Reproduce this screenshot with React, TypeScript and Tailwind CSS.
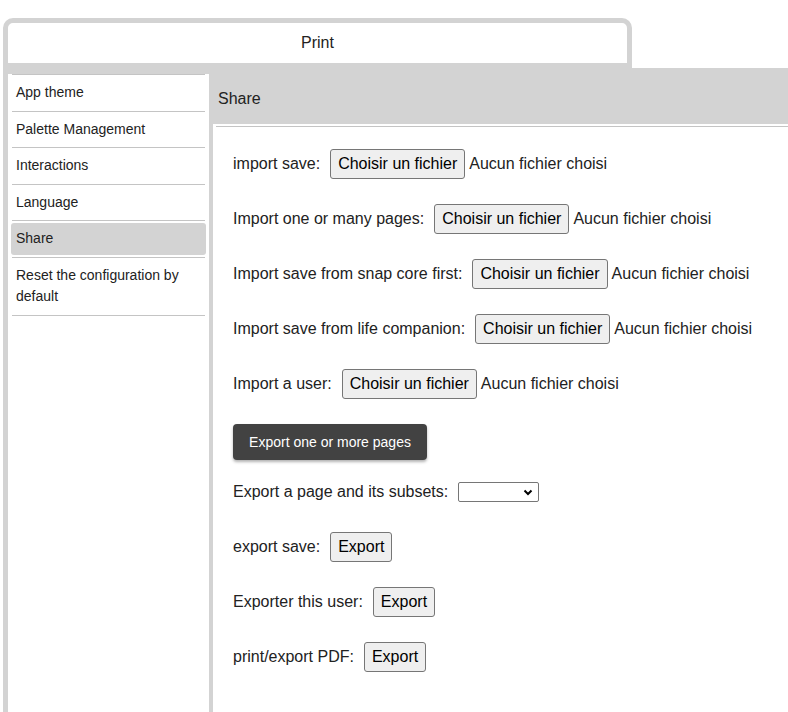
const MENU = [
  { label: "App theme" },
  { label: "Palette Management" },
  { label: "Interactions" },
  { label: "Language" },
  { label: "Share", active: true },
  { label: "Reset the configuration by default" },
];

function FileRow({ label }: { label: string }) {
  return (
    <div className="flex items-center h-[30px]">
      <span>{label}</span>
      <button className="ml-[10px] h-[30px] px-[7px] border border-[#767676] rounded-[3px] bg-[#efefef] text-[#000]">
        Choisir un fichier
      </button>
      <span className="ml-[4px]">Aucun fichier choisi</span>
    </div>
  );
}

function ExportRow({ label }: { label: string }) {
  return (
    <div className="flex items-center h-[30px]">
      <span>{label}</span>
      <button className="ml-[10px] h-[30px] px-[7px] border border-[#767676] rounded-[3px] bg-[#efefef] text-[#000]">
        Export
      </button>
    </div>
  );
}

export default function App() {
  return (
    <div className="w-[788px] h-[712px] overflow-hidden bg-white text-[#222] text-[16px]" style={{ fontFamily: '"Liberation Sans", Arial, sans-serif' }}>
      <div className="h-[18px]" />
      <div className="ml-[3px] w-[629px] h-[50px] border-[5px] border-[#d3d3d3] rounded-t-[10px] bg-white flex items-center justify-center">
        <span className="-mt-[1px]">Print</span>
      </div>
      <div className="ml-[3px] bg-[#d3d3d3] h-[644px] flex">
        <div className="ml-[5px] mt-[6px] w-[201px] bg-white px-[3px]">
          <div className="mx-px border-t border-[#c4c4c4]" />
          {MENU.map(m => (
            <div key={m.label} className="mx-px border-b border-[#c4c4c4]">
              <div className={`my-[2px] -mx-px px-[5px] py-[5px] text-[14px] leading-[21.5px] rounded-[3px] ${m.active ? "bg-[#d3d3d3]" : ""}`}>
                {m.label}
              </div>
            </div>
          ))}
        </div>
        <div className="ml-[4px] flex-1 flex flex-col">
          <div className="h-[56px] flex items-center pl-[5px] pt-[6px]">Share</div>
          <div className="flex-1 bg-white pt-[2px] pl-[3px]">
            <div className="h-px bg-[#c4c4c4]" />
            <div className="pl-[17px] pt-[22px] flex flex-col">
              <FileRow label="import save:" />
              <div className="mt-[25px]"><FileRow label="Import one or many pages:" /></div>
              <div className="mt-[25px]"><FileRow label="Import save from snap core first:" /></div>
              <div className="mt-[25px]"><FileRow label="Import save from life companion:" /></div>
              <div className="mt-[25px]"><FileRow label="Import a user:" /></div>
              <button className="mt-[25px] w-[194px] h-[36px] rounded-[4px] bg-[#424242] text-white text-[14px] shadow-[0_2px_3px_rgba(0,0,0,0.3)]">
                Export one or more pages
              </button>
              <div className="mt-[17px] flex items-center h-[30px]">
                <span>Export a page and its subsets:</span>
                <div className="ml-[10px] w-[81px] h-[20px] border border-[#767676] rounded-[2px] bg-white flex items-center justify-end pr-[5px]">
                  <svg width="10" height="7" viewBox="0 0 10 7">
                    <path d="M1.5 1.5 L5 5 L8.5 1.5" fill="none" stroke="#000" strokeWidth="2" />
                  </svg>
                </div>
              </div>
              <div className="mt-[25px]"><ExportRow label="export save:" /></div>
              <div className="mt-[25px]"><ExportRow label="Exporter this user:" /></div>
              <div className="mt-[25px]"><ExportRow label="print/export PDF:" /></div>
            </div>
          </div>
        </div>
      </div>
    </div>
  );
}
